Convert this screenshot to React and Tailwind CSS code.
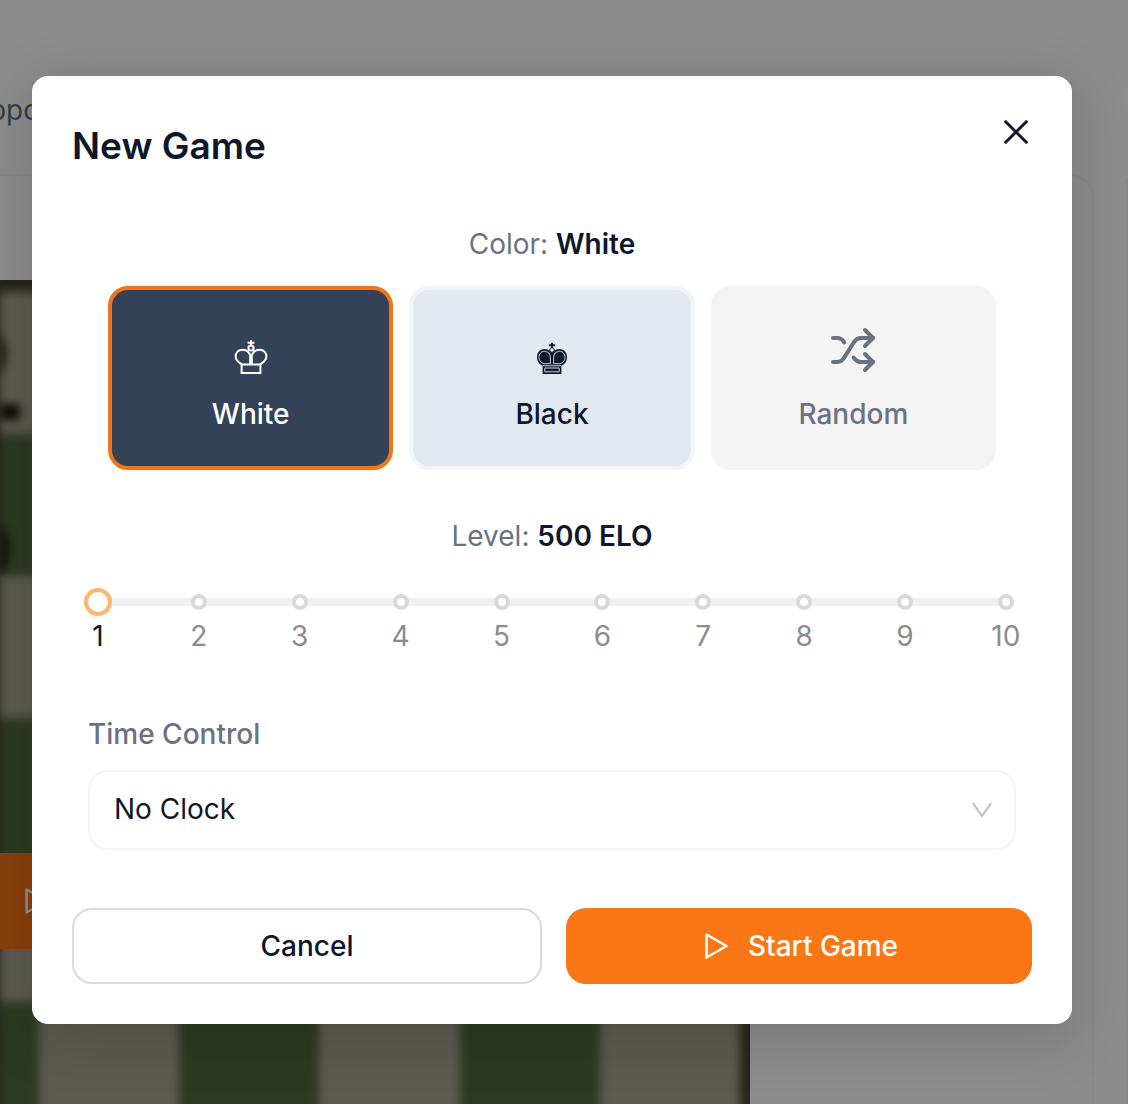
import { useState } from "react";
import { Shuffle } from "lucide-react";

const ELO = [500, 700, 900, 1100, 1300, 1500, 1700, 1900, 2100, 2300];
const ROWS = [0, 1, 2, 3, 4, 5];
const COLUMNS = [0, 1, 2, 3, 4, 5];

function WhiteKing() {
  return (
    <svg className="size-12" viewBox="0 0 48 48" fill="none" stroke="currentColor" strokeWidth="2" aria-hidden="true">
      <path d="M24 14.3V19M20.6 16.8h6.800" />
      <circle cx="24" cy="22" r="2.6" />
      <path d="M14.800 38.400C10.800 36 8.600 33.600 8.600 30.600c0-4 2.700-6.900 6.900-6.900 4.500 0 7.700 3 7.700 7.300v7.400M33.200 38.400C37.200 36 39.400 33.600 39.400 30.600c0-4-2.700-6.900-6.900-6.900-4.500 0-7.700 3-7.700 7.300v7.400" />
      <path d="M14.600 38.600h18.800v8.400H14.600z" />
    </svg>
  );
}

function BlackKing() {
  return (
    <svg className="size-12" viewBox="0 0 48 48" fill="none" aria-hidden="true">
      <path d="M24 16.800V22M20.800 19.200h6.400" stroke="currentColor" strokeWidth="2" />
      <path
        d="M14.600 40C10.800 37.800 9 35.400 9 31.600c0-5 3-8.500 7.200-8.500 2.400 0 4.300.700 5.600 2.100h4.400c1.300-1.400 3.200-2.100 5.600-2.100 4.200 0 7.200 3.500 7.200 8.500 0 3.800-1.800 6.200-5.600 8.400V48H14.600z"
        fill="currentColor"
      />
      <circle cx="24" cy="24" r="2.300" fill="#e2e8f0" stroke="currentColor" strokeWidth="1" />
      <path
        d="M15.500 37.700c-3-1.600-4.500-3.400-4.500-6.100 0-3.600 2.100-6.200 5.300-6.200 3.800 0 6 2.300 6 6v6.300zM32.500 37.700c3-1.600 4.500-3.400 4.500-6.100 0-3.600-2.100-6.200-5.300-6.200-3.800 0-6 2.300-6 6v6.300zM16.800 42h14.400v3.800H16.800zM14.600 39.800h18.800"
        stroke="#e2e8f0"
        strokeWidth=".9"
      />
    </svg>
  );
}

function Play() {
  return (
    <svg className="h-7 w-6 shrink-0" viewBox="0 0 24 28" fill="none" stroke="currentColor" strokeWidth="2.600" strokeLinejoin="round" aria-hidden="true">
      <path d="M2.600 2.500v23L22.400 14z" />
    </svg>
  );
}

function Backdrop() {
  return (
    <div className="col-start-1 row-start-1 flex h-screen min-h-full flex-col overflow-hidden bg-white" aria-hidden="true">
      <div className="flex h-[174px] shrink-0 justify-start pt-[90px]">
        <div className="flex w-10 justify-end text-[28px] leading-10 text-gray-500">Oppo</div>
      </div>
      <div className="flex flex-1 gap-8">
        <div className="flex-1 rounded-tr-3xl border-t-2 border-r-2 border-[#f6f6f6] pt-[104px]">
          <div className="relative w-[750px]">
            <div className="overflow-hidden bg-[#48452f] pt-3 pr-2.5">
              <div className="blur-[5px]">
                {ROWS.map((row) => (
                  <div key={row} className="flex h-[142px]">
                    {COLUMNS.map((column) => (
                      <div
                        key={column}
                        className={
                          (column === 0 ? "w-[39px] " : "flex-1 ") +
                          ((row + column) % 2 ? "bg-[#54683c]" : "bg-[#a8a693]")
                        }
                      />
                    ))}
                  </div>
                ))}
              </div>
            </div>
            <svg className="absolute top-12 left-0 h-64 w-8 blur-[4px]" viewBox="0 0 32 256" fill="#1d1d12">
              <path d="M0 6C8 16 8 34 0 46zM0 76h20v16H0z" />
              <path d="M0 196c12 8 12 42 0 50z" />
            </svg>
            <div className="absolute top-[573px] left-0 flex h-24 w-40 items-center bg-[#f97316] pl-6 text-white">
              <Play />
            </div>
          </div>
        </div>
        <div className="mt-1 w-px border-l-2 border-[#f6f6f6]" />
      </div>
    </div>
  );
}

export default function App() {
  const [color, setColor] = useState("White");
  const [level, setLevel] = useState(1);

  const ring = (name, idle) => (color === name ? "border-[#f27418]" : idle);

  return (
    <div className="grid min-h-screen font-['Inter',sans-serif] text-[28px] leading-10 text-slate-900">
      <Backdrop />
      <div className="z-10 col-start-1 row-start-1 bg-black/45 pt-[76px] pr-14 pb-20 pl-8">
        <div
          role="dialog"
          aria-modal="true"
          aria-labelledby="dialog-title"
          className="rounded-2xl bg-white p-10 shadow-[0_12px_56px_4px_rgba(0,0,0,0.15)]"
        >
          <header className="flex items-start justify-between">
            <h2 id="dialog-title" className="text-[37px] leading-[60px] font-semibold">New Game</h2>
            <button type="button" aria-label="Close" className="flex size-8 items-center justify-center">
              <svg className="size-6" viewBox="0 0 24 24" fill="none" stroke="currentColor" strokeWidth="3" strokeLinecap="round" aria-hidden="true">
                <path d="m1.700 1.700 20.600 20.600M22.300 1.700 1.700 22.300" />
              </svg>
            </button>
          </header>

          <p className="mt-12 text-center text-gray-500">
            Color: <strong className="font-semibold text-slate-900">{color}</strong>
          </p>
          <div className="mt-[22px] grid grid-cols-3 gap-4 px-9 font-medium">
            <button
              type="button"
              aria-pressed={color === "White"}
              onClick={() => setColor("White")}
              className={"flex h-[184px] flex-col items-center gap-5 rounded-[20px] border-4 bg-[#334257] pt-9 text-white " + ring("White", "border-slate-600")}
            >
              <WhiteKing />
              White
            </button>
            <button
              type="button"
              aria-pressed={color === "Black"}
              onClick={() => setColor("Black")}
              className={"flex h-[184px] flex-col items-center gap-5 rounded-[20px] border-4 bg-slate-200 pt-9 " + ring("Black", "border-slate-100")}
            >
              <BlackKing />
              Black
            </button>
            <button
              type="button"
              aria-pressed={color === "Random"}
              onClick={() => setColor("Random")}
              className={"flex h-[184px] flex-col items-center gap-5 rounded-[20px] border-4 bg-[#f4f4f5] pt-9 text-gray-500 " + ring("Random", "border-[#f4f4f5]")}
            >
              <Shuffle className="size-12" aria-hidden="true" />
              Random
            </button>
          </div>

          <p className="mt-[46px] text-center text-gray-500">
            <label htmlFor="level">Level:</label>{" "}
            <strong className="font-semibold text-slate-900">{ELO[level - 1]} ELO</strong>
          </p>
          <div className="mt-8 px-1.5">
            <div className="grid h-7 items-center">
              <div className="col-start-1 row-start-1 mx-5 h-2 bg-[#f0f0f0]" />
              <div className="col-start-1 row-start-1 flex items-center justify-between">
                {ELO.map((elo, i) => (
                  <div key={elo} className="flex w-10 justify-center">
                    <span
                      className={
                        i + 1 === level
                          ? "size-7 rounded-full border-4 border-[#ffb56b] bg-white"
                          : "size-4 rounded-full border-4 border-[#d9d9d9] bg-white"
                      }
                    />
                  </div>
                ))}
              </div>
              <input
                id="level"
                type="range"
                min="1"
                max="10"
                value={level}
                onChange={(e) => setLevel(Number(e.target.value))}
                className="col-start-1 row-start-1 mx-1.5 h-7 cursor-pointer opacity-0"
              />
            </div>
            <div className="flex justify-between">
              {ELO.map((elo, i) => (
                <span key={elo} className={"w-10 text-center " + (i + 1 === level ? "text-slate-900" : "text-[#8c8c8c]")}>
                  {i + 1}
                </span>
              ))}
            </div>
          </div>

          <div className="mt-[58px] px-4">
            <label htmlFor="clock" className="block font-medium text-gray-500">Time Control</label>
            <div className="relative mt-4">
              <select
                id="clock"
                className="block h-20 w-full appearance-none rounded-[20px] border-2 border-[#f5f5f5] bg-white px-6 pb-0.5"
              >
                <option>No Clock</option>
                <option>5 min</option>
                <option>10 min</option>
              </select>
              <svg className="pointer-events-none absolute top-8 right-6 h-4 w-5" viewBox="0 0 20 16" fill="none" stroke="#bfbfbf" strokeWidth="2" aria-hidden="true">
                <path d="m.8 1 9.200 13L19.200 1" />
              </svg>
            </div>
          </div>

          <footer className="mt-[58px] flex gap-6 font-medium">
            <button type="button" className="h-[76px] flex-1 rounded-[20px] border-2 border-[#d9d9df] bg-white">Cancel</button>
            <button type="button" className="flex h-[76px] flex-1 items-center justify-center rounded-[20px] bg-[#fb7614] text-white">
              <span className="flex items-center gap-5 pl-1">
                <Play />
                Start Game
              </span>
            </button>
          </footer>
        </div>
      </div>
    </div>
  );
}
